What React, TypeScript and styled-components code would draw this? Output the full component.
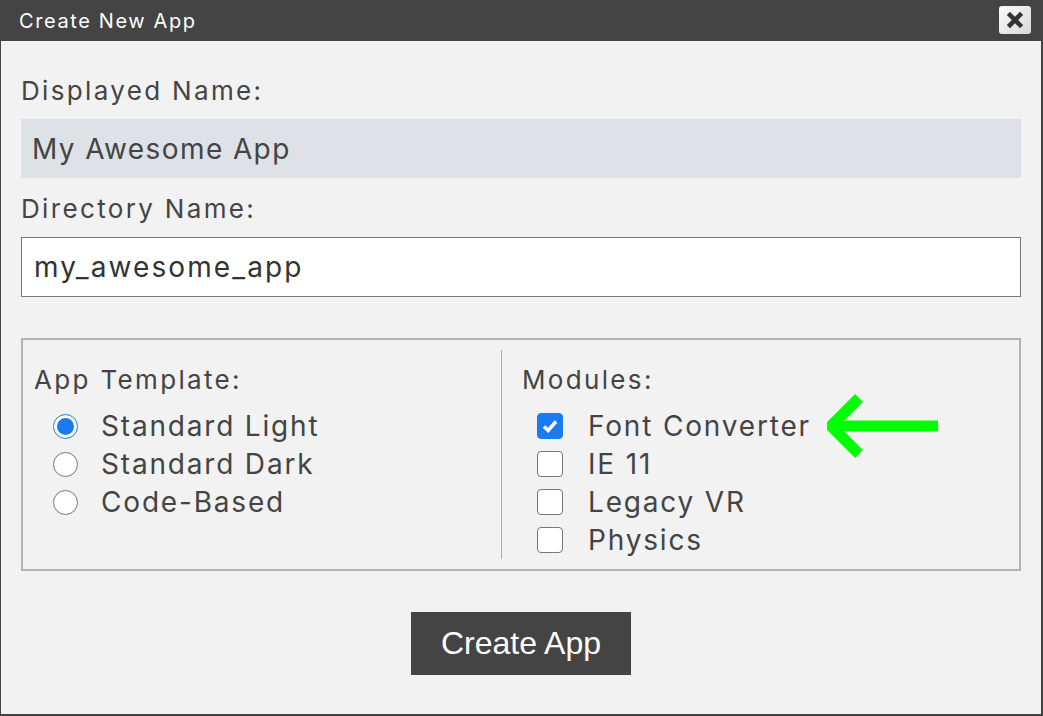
import React from "react";
import styled, { createGlobalStyle } from "styled-components";

const Global = createGlobalStyle`
  html, body { margin: 0; padding: 0; background: #f2f2f2; }
  * { box-sizing: border-box; }
`;

const Window = styled.div`
  width: 1043px;
  height: 716px;
  display: flex;
  flex-direction: column;
  background: #f2f2f2;
  border-left: 1px solid #444;
  border-right: 2px solid #444;
  border-bottom: 2px solid #444;
  font-family: Inter, "Noto Sans", sans-serif;
  color: #444;
`;

const TitleBar = styled.div`
  height: 41px;
  flex: none;
  background: #444;
  display: flex;
  align-items: center;
  justify-content: space-between;
  padding: 0 12px 0 19px;
  margin-left: -1px;
  margin-right: -2px;
`;

const Title = styled.span`
  color: #fff;
  font-size: 20px;
  letter-spacing: 0.08em;
`;

const CloseButton = styled.button`
  width: 32px;
  height: 28px;
  margin-top: -2px;
  border: none;
  border-radius: 3px;
  background: linear-gradient(135deg, #fafafa, #d9d9d9);
  display: flex;
  align-items: center;
  justify-content: center;
  padding: 0;
`;

const Content = styled.div`
  flex: 1;
  display: flex;
  flex-direction: column;
  padding: 34px 20px 0 20px;
`;

const FieldLabel = styled.div<{ $top?: number }>`
  font-size: 26px;
  line-height: 32px;
  letter-spacing: 0.09em;
  margin-top: ${(p) => p.$top ?? 0}px;
  margin-bottom: 12px;
`;

const ReadOnlyField = styled.div`
  height: 59px;
  background: #dee1e6;
  display: flex;
  align-items: center;
  padding-left: 11px;
  font-size: 28px;
  letter-spacing: 0.05em;
  color: #444;
`;

const TextField = styled.div`
  height: 60px;
  background: #fff;
  border: 1px solid #777;
  display: flex;
  align-items: center;
  padding-left: 12px;
  font-size: 28px;
  letter-spacing: 0.075em;
  color: #333;
`;

const GroupBox = styled.div`
  margin-top: 41px;
  height: 233px;
  border: 2px solid #b3b3b3;
  display: grid;
  grid-template-columns: 478px 1px 1fr;
  padding: 10px 0;
`;

const Column = styled.div<{ $pad: number }>`
  display: flex;
  flex-direction: column;
  padding: 14px 0 0 ${(p) => p.$pad}px;
`;

const Divider = styled.div`
  background: #aaa;
`;

const GroupTitle = styled.div`
  font-size: 26px;
  line-height: 32px;
  letter-spacing: 0.09em;
  margin-bottom: 11px;
`;

const Row = styled.div<{ $indent: number; $gap: number }>`
  height: 38px;
  display: flex;
  align-items: center;
  padding-left: ${(p) => p.$indent}px;
  gap: ${(p) => p.$gap}px;
  font-size: 28px;
  letter-spacing: 0.065em;
  color: #444;
`;

const Radio = styled.span<{ $on?: boolean }>`
  width: 25px;
  height: 25px;
  border-radius: 50%;
  flex: none;
  background: #fff;
  border: 1px solid ${(p) => (p.$on ? "#1a7bf0" : "#767676")};
  display: flex;
  align-items: center;
  justify-content: center;
  &::after {
    content: "";
    width: 17px;
    height: 17px;
    border-radius: 50%;
    background: ${(p) => (p.$on ? "#1a7bf0" : "transparent")};
  }
`;

const Check = styled.span<{ $on?: boolean }>`
  width: 26px;
  height: 26px;
  border-radius: 4px;
  flex: none;
  background: ${(p) => (p.$on ? "#1a7bf0" : "#fff")};
  border: 1px solid ${(p) => (p.$on ? "#1a7bf0" : "#767676")};
  display: flex;
  align-items: center;
  justify-content: center;
`;

const Arrow = styled.svg`
  flex: none;
  margin-left: -11px;
`;

const Footer = styled.div`
  display: flex;
  justify-content: center;
  margin-top: 41px;
`;

const PrimaryButton = styled.button`
  width: 220px;
  height: 63px;
  background: #444;
  color: #fff;
  border: none;
  font-family: "Liberation Sans", Arial, sans-serif;
  font-size: 32px;
  padding: 0;
`;

const templates = [
  { name: "Standard Light", on: true },
  { name: "Standard Dark", on: false },
  { name: "Code-Based", on: false },
];

const modules = [
  { name: "Font Converter", on: true },
  { name: "IE 11", on: false },
  { name: "Legacy VR", on: false },
  { name: "Physics", on: false },
];

export default function App() {
  return (
    <>
      <Global />
      <Window>
        <TitleBar>
          <Title>Create New App</Title>
          <CloseButton aria-label="Close">
            <svg width="18" height="18" viewBox="0 0 18 18">
              <path d="M4 4 L14 14 M14 4 L4 14" stroke="#333" strokeWidth="4.5" strokeLinecap="square" />
            </svg>
          </CloseButton>
        </TitleBar>
        <Content>
          <FieldLabel>Displayed Name:</FieldLabel>
          <ReadOnlyField>My Awesome App</ReadOnlyField>
          <FieldLabel $top={15}>Directory Name:</FieldLabel>
          <TextField>my_awesome_app</TextField>
          <GroupBox>
            <Column $pad={11}>
              <GroupTitle>App Template:</GroupTitle>
              {templates.map((t) => (
                <Row key={t.name} $indent={19} $gap={23}>
                  <Radio $on={t.on} />
                  <span>{t.name}</span>
                </Row>
              ))}
            </Column>
            <Divider />
            <Column $pad={20}>
              <GroupTitle>Modules:</GroupTitle>
              {modules.map((m) => (
                <Row key={m.name} $indent={15} $gap={25}>
                  <Check $on={m.on}>
                    {m.on && (
                      <svg width="18" height="18" viewBox="0 0 18 18">
                        <path d="M3 9.5 L7.2 13.5 L15 4.5" fill="none" stroke="#fff" strokeWidth="3.5" />
                      </svg>
                    )}
                  </Check>
                  <span>{m.name}</span>
                  {m.on && (
                    <Arrow width="116" height="68" viewBox="0 0 116 68">
                      <polyline points="34,6 6,34 34,62" fill="none" stroke="#00ff00" strokeWidth="11" strokeLinejoin="bevel" />
                      <line x1="8" y1="34" x2="113" y2="34" stroke="#00ff00" strokeWidth="11" />
                    </Arrow>
                  )}
                </Row>
              ))}
            </Column>
          </GroupBox>
          <Footer>
            <PrimaryButton>Create App</PrimaryButton>
          </Footer>
        </Content>
      </Window>
    </>
  );
}
